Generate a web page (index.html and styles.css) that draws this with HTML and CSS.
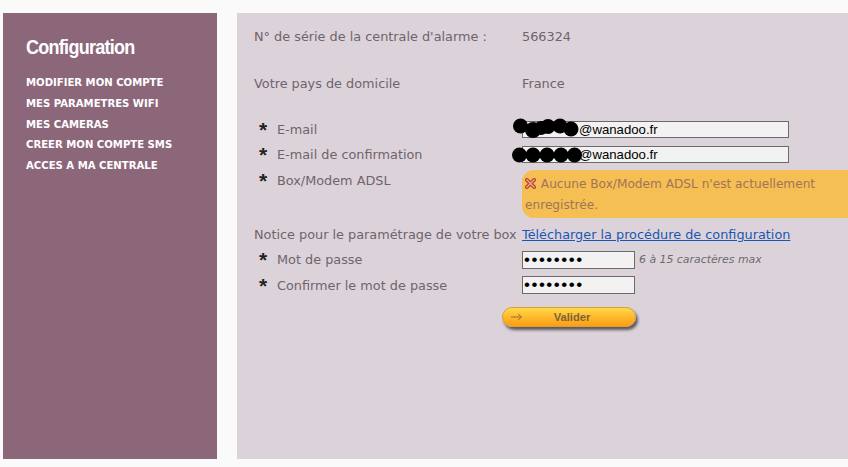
FILE: index.html
```html
<!DOCTYPE html>
<html lang="fr">
<head>
    <meta charset="UTF-8">
    <title>Configuration</title>
    <link rel="stylesheet" href="styles.css">
</head>
<body>
    <div class="page">
        <aside class="sidebar">
            <h1>Configuration</h1>
            <ul class="menu">
                <li><a href="#">MODIFIER MON COMPTE</a></li>
                <li><a href="#">MES PARAMETRES WIFI</a></li>
                <li><a href="#">MES CAMERAS</a></li>
                <li><a href="#">CREER MON COMPTE SMS</a></li>
                <li><a href="#">ACCES A MA CENTRALE</a></li>
            </ul>
        </aside>
        <main class="content">
            <div class="row row-serial">
                <span class="label">N° de série de la centrale d'alarme :</span>
                <span>566324</span>
            </div>
            <div class="row row-country">
                <span class="label">Votre pays de domicile</span>
                <span>France</span>
            </div>
            <div class="row row-email">
                <span class="label"><b class="star">*</b>E-mail</span>
                <div class="field">
                    <input class="input-wide" type="text" value="@wanadoo.fr">
                    <svg class="blot blot-a" width="70" height="22" viewBox="0 0 70 22">
                        <circle cx="8.5" cy="8" r="7.5"/><circle cx="21" cy="12" r="8"/><circle cx="29" cy="10" r="7"/>
                        <circle cx="36" cy="8.5" r="7.5"/><circle cx="48" cy="8" r="7.5"/><circle cx="59" cy="11" r="7.5"/>
                    </svg>
                </div>
            </div>
            <div class="row row-confirm">
                <span class="label"><b class="star">*</b>E-mail de confirmation</span>
                <div class="field">
                    <input class="input-wide" type="text" value="@wanadoo.fr">
                    <svg class="blot blot-b" width="76" height="20" viewBox="0 0 76 20">
                        <circle cx="9.5" cy="10" r="7.5"/><circle cx="23" cy="10" r="7.5"/><circle cx="37" cy="10" r="7.5"/>
                        <circle cx="51" cy="10" r="7.5"/><circle cx="64.5" cy="10" r="7.5"/>
                    </svg>
                </div>
            </div>
            <div class="row row-box">
                <span class="label"><b class="star">*</b>Box/Modem ADSL</span>
                <div class="warning">
                    <svg class="cross" width="11" height="11" viewBox="0 0 12 12">
                        <path d="M2 2 L10 10 M10 2 L2 10" stroke="#b5432a" stroke-width="4" stroke-linecap="round"/>
                        <path d="M2 2 L10 10 M10 2 L2 10" stroke="#f2a08c" stroke-width="1.6" stroke-linecap="round"/>
                    </svg>
                    Aucune Box/Modem ADSL n'est actuellement enregistrée.
                </div>
            </div>
            <div class="row row-notice">
                <span class="label">Notice pour le paramétrage de votre box</span>
                <a class="link" href="#">Télécharger la procédure de configuration</a>
            </div>
            <div class="row row-pass">
                <span class="label"><b class="star">*</b>Mot de passe</span>
                <div class="field-inline">
                    <input class="input-short" type="password" value="12345678">
                    <em class="hint">6 à 15 caractères max</em>
                </div>
            </div>
            <div class="row row-pass2">
                <span class="label"><b class="star">*</b>Confirmer le mot de passe</span>
                <input class="input-short" type="password" value="12345678">
            </div>
            <button class="submit" type="button">
                <svg width="12" height="8" viewBox="0 0 12 8">
                    <path d="M0 4 H10 M7 1 L10.5 4 L7 7" fill="none" stroke="#7d5c26" stroke-width="0.8"/>
                </svg>
                <span>Valider</span>
            </button>
        </main>
    </div>
</body>
</html>
```

FILE: styles.css
```css
html, body {
    margin: 0;
    height: 100%;
}

body {
    background: #fafafa;
    font-family: "DejaVu Sans", Verdana, sans-serif;
    font-size: 12.83px;
    color: #6f636d;
    overflow: hidden;
}

.page {
    display: flex;
    gap: 20px;
    height: 446px;
    padding: 13px 0 8px 3px;
}

.sidebar {
    width: 214px;
    flex: none;
    background: #8c677a;
    padding: 23px 0 0 23px;
    box-sizing: border-box;
}

.sidebar h1 {
    margin: 0 0 14px;
    font-family: "Liberation Sans", Arial, sans-serif;
    font-size: 20px;
    line-height: 22px;
    font-weight: bold;
    letter-spacing: -0.8px;
    color: #fff;
    transform: scaleX(0.9);
    transform-origin: left;
}

.menu {
    list-style: none;
    margin: 0;
    padding: 0;
}

.menu li {
    height: 20.75px;
    line-height: 20.75px;
}

.menu a {
    color: #fff;
    font-size: 10.1px;
    font-weight: bold;
    text-decoration: none;
    white-space: nowrap;
}

.content {
    flex: 1;
    background: #dcd3da;
    padding: 0 0 0 17px;
    min-width: 0;
}

.row {
    display: grid;
    grid-template-columns: 268px 1fr;
    align-items: start;
    line-height: 18px;
}

.row-serial { margin-top: 15px; }
.row-country { margin-top: 29px; }
.row-email { margin-top: 28px; }
.row-confirm { margin-top: 7px; }
.row-box { margin-top: 8px; }
.row-notice { margin-top: 8px; }
.row-pass { margin-top: 7px; }
.row-pass2 { margin-top: 8px; }

.star {
    display: inline-block;
    width: 23px;
    padding-left: 5px;
    box-sizing: border-box;
    font-family: "Liberation Sans", Arial, sans-serif;
    font-size: 21px;
    line-height: 18px;
    vertical-align: top;
    color: #222;
}

.field {
    position: relative;
}

input {
    display: block;
    box-sizing: border-box;
    height: 17px;
    padding: 0 2px 0 56px;
    margin: 0;
    border: 1px solid #6b6b6b;
    border-radius: 0;
    background: #f2f2f2;
    color: #000;
    font-family: "Liberation Sans", Arial, sans-serif;
    font-size: 13.2px;
    outline: none;
}

.input-wide {
    width: 267px;
}

.input-short {
    width: 113px;
    height: 18px;
    margin-top: -1px;
    padding-left: 1px;
    font-size: 17px;
    letter-spacing: 1.5px;
}

.blot {
    position: absolute;
    fill: #000;
}

.blot-a { left: -10px; top: -3px; }
.blot-b { left: -12px; top: -1px; }

.warning {
    width: 326px;
    height: 48px;
    margin-top: -2px;
    box-sizing: border-box;
    padding: 4px 4px 0 3px;
    background: #f5bf53;
    border-radius: 12px 0 0 12px;
    color: #a0745a;
    font-size: 12.15px;
    line-height: 21px;
}

.cross {
    margin-right: 1px;
    vertical-align: -1px;
}

.link {
    color: #1a57b5;
    white-space: nowrap;
}

.field-inline {
    display: flex;
    align-items: center;
    gap: 4px;
}

.hint {
    font-size: 10.9px;
    color: #6b6b6b;
}

.submit {
    display: flex;
    align-items: center;
    width: 134px;
    height: 20px;
    margin: 12px 0 0 248px;
    padding: 0 0 0 8px;
    box-sizing: border-box;
    border: 1px solid #d8a233;
    border-radius: 10px;
    background: linear-gradient(#ffd94a, #ffb52b 55%, #f99f14);
    box-shadow: 2px 3px 3px #5f555a;
    cursor: pointer;
}

.submit span {
    flex: 1;
    padding-right: 14px;
    font-family: "Liberation Sans", Arial, sans-serif;
    font-size: 11.2px;
    font-weight: bold;
    color: #7d6536;
    text-align: center;
}
```
